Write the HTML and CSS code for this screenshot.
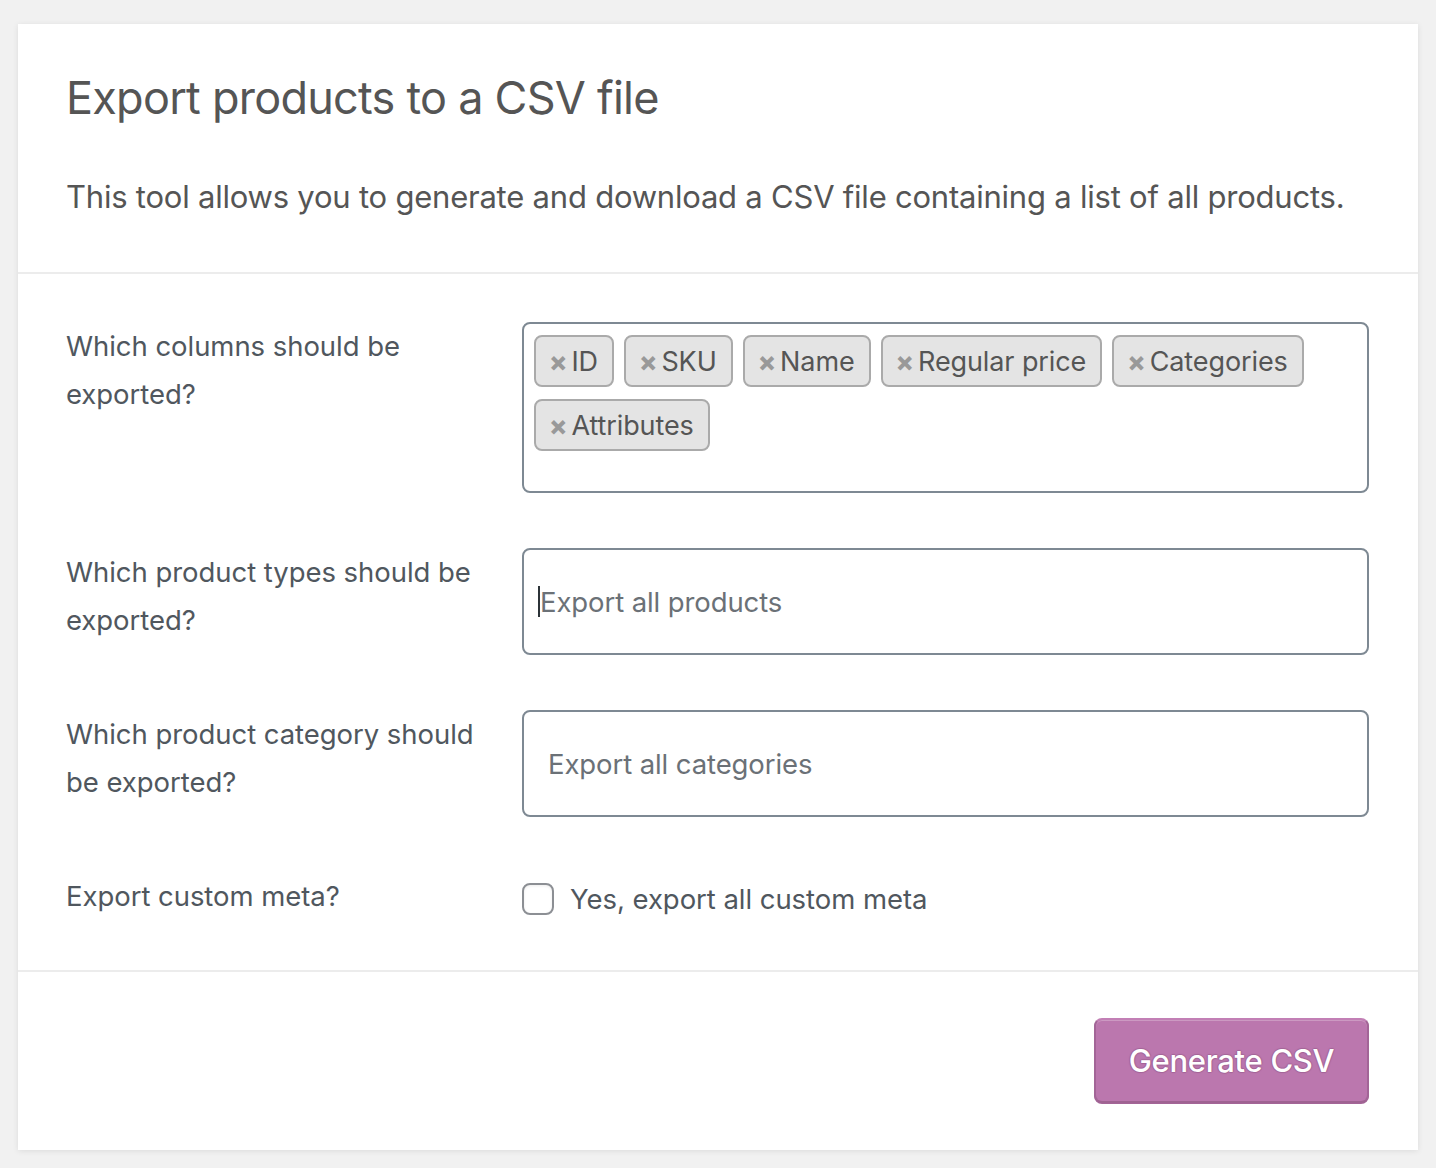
FILE: index.html
```html
<!DOCTYPE html>
<html lang="en">
<head>
<meta charset="utf-8">
<title>Export products</title>
<link rel="stylesheet" href="styles.css">
</head>
<body>
<div class="card">
  <header class="card-header">
    <h2 class="title">Export products to a CSV file</h2>
    <p class="desc">This tool allows you to generate and download a CSV file containing a list of all products.</p>
  </header>
  <section class="form">
    <div class="row">
      <div class="label">Which columns should be exported?</div>
      <div class="field multi">
        <span class="tag"><span class="x">×</span>ID</span>
        <span class="tag"><span class="x">×</span>SKU</span>
        <span class="tag"><span class="x">×</span>Name</span>
        <span class="tag"><span class="x">×</span>Regular price</span>
        <span class="tag"><span class="x">×</span>Categories</span>
        <span class="tag"><span class="x">×</span>Attributes</span>
      </div>
    </div>
    <div class="row">
      <div class="label">Which product types should be exported?</div>
      <div class="field single focus"><span class="caret"></span><span class="ph">Export all products</span></div>
    </div>
    <div class="row">
      <div class="label">Which product category should be exported?</div>
      <div class="field single"><span class="ph ph-pad">Export all categories</span></div>
    </div>
    <div class="row row-check">
      <div class="label">Export custom meta?</div>
      <label class="check"><span class="box"></span><span class="check-text">Yes, export all custom meta</span></label>
    </div>
  </section>
  <footer class="card-footer">
    <button class="btn">Generate CSV</button>
  </footer>
</div>
</body>
</html>
```
FILE: styles.css
```css
html, body {
  margin: 0;
  padding: 0;
}
body {
  background: #f1f1f1;
  font-family: Inter, "Noto Sans", "Liberation Sans", sans-serif;
  color: #555;
  padding: 24px 18px 18px 18px;
}
.card {
  width: 1400px;
  background: #fff;
  box-shadow: 0 1px 6px rgba(0, 0, 0, 0.09);
}
.card-header {
  padding: 46px 48px 55px 48px;
  border-bottom: 2px solid #ececec;
}
.title {
  margin: 0;
  font-size: 45px;
  font-weight: 400;
  line-height: 56px;
  color: #555;
  letter-spacing: -0.75px;
}
.desc {
  margin: 51px 0 0 0;
  font-size: 31px;
  line-height: 40px;
  color: #555;
  letter-spacing: -0.22px;
}
.form {
  padding: 48px 49px 50px 48px;
  display: flex;
  flex-direction: column;
  gap: 55px;
}
.row {
  display: grid;
  grid-template-columns: 456px 1fr;
  align-items: start;
}
.label {
  font-size: 27.5px;
  line-height: 48px;
  color: #50575e;
  padding-right: 40px;
  letter-spacing: -0.05px;
}
.field {
  border: 2px solid #7e8993;
  border-radius: 8px;
  box-sizing: border-box;
}
.multi {
  min-height: 171px;
  padding: 11px 10px 40px 10px;
  display: flex;
  flex-wrap: wrap;
  align-content: flex-start;
  gap: 12px 10px;
}
.tag {
  display: inline-flex;
  align-items: center;
  height: 52px;
  box-sizing: border-box;
  padding: 0 14px 0 13px;
  background: #e4e4e4;
  border: 2px solid #aaa;
  border-radius: 8px;
  font-size: 27px;
  color: #555;
  letter-spacing: -0.1px;
}
.x {
  color: #999;
  font-weight: 800;
  font-size: 27px;
  margin-right: 4px;
  line-height: 1;
}
.single {
  height: 107px;
  display: flex;
  align-items: center;
  padding: 0 14px;
}
.caret {
  width: 2px;
  height: 31px;
  background: #2c3338;
}
.ph {
  font-size: 27.5px;
  color: #6b7177;
  letter-spacing: -0.1px;
}
.ph-pad {
  padding-left: 10px;
}
.check {
  display: flex;
  align-items: center;
  gap: 16px;
  margin-top: 10px;
}
.box {
  width: 32px;
  height: 32px;
  box-sizing: border-box;
  border: 2px solid #8c8f94;
  border-radius: 8px;
  box-shadow: inset 0 1px 3px rgba(0, 0, 0, 0.08);
  background: #fff;
}
.check-text {
  font-size: 27.5px;
  color: #50575e;
  letter-spacing: -0.05px;
}
.card-footer {
  border-top: 2px solid #ececec;
  padding: 46px 49px 47px 48px;
  display: flex;
  justify-content: flex-end;
}
.btn {
  width: 275px;
  height: 85px;
  background: #bb77ae;
  border: 2px solid #a36597;
  border-top-color: #c27fb5;
  border-bottom-color: #9f6392;
  border-radius: 8px;
  color: #fff;
  font-family: Inter, "Noto Sans", "Liberation Sans", sans-serif;
  font-size: 31px;
  font-weight: 500;
  letter-spacing: -0.3px;
  text-shadow: 0 -1px 1px #a36597, 1px 0 1px #a36597, 0 1px 1px #a36597, -1px 0 1px #a36597;
  box-shadow: inset 0 1px 0 rgba(255, 255, 255, 0.25), 0 1px 0 #a36597;
  padding: 0;
}
```
